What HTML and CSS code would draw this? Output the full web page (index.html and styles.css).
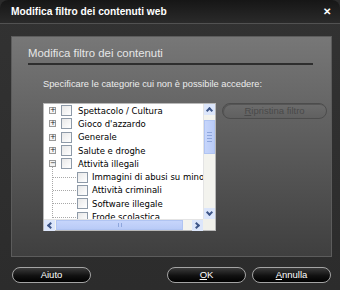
FILE: index.html
```html
<!DOCTYPE html>
<html>
<head>
	<title>Modifica filtro dei contenuti web</title>
	<link rel="stylesheet" href="styles.css">
</head>
<body>
	<div class="window">

		<div class="titlebar">
			<span class="title">Modifica filtro dei contenuti web</span>
			<span class="close">&#x2715;</span>
		</div>

		<div class="content">
			<div class="panel">
				<h2 class="heading">Modifica filtro dei contenuti</h2>
				<p class="hint">Specificare le categorie cui non è possibile accedere:</p>

				<div class="row">
					<div class="tree">
						<ul class="items">
							<li class="item"><span class="exp">+</span><span class="check"></span>Spettacolo / Cultura</li>
							<li class="item"><span class="exp">+</span><span class="check"></span>Gioco d'azzardo</li>
							<li class="item"><span class="exp">+</span><span class="check"></span>Generale</li>
							<li class="item"><span class="exp">+</span><span class="check"></span>Salute e droghe</li>
							<li class="item"><span class="exp">&minus;</span><span class="check"></span>Attività illegali</li>
							<li>
								<ul class="children">
									<li class="item"><span class="branch"></span><span class="check"></span>Immagini di abusi su minori</li>
									<li class="item"><span class="branch"></span><span class="check"></span>Attività criminali</li>
									<li class="item"><span class="branch"></span><span class="check"></span>Software illegale</li>
									<li class="item"><span class="branch"></span><span class="check"></span>Frode scolastica</li>
								</ul>
							</li>
						</ul>

						<div class="vscroll">
							<span class="arrow up"></span>
							<span class="thumb"><i></i><i></i><i></i><i></i></span>
							<span class="track"></span>
							<span class="arrow down"></span>
						</div>
						<div class="hscroll">
							<span class="arrow left"></span>
							<span class="thumb"><i></i><i></i></span>
							<span class="track"></span>
							<span class="arrow right"></span>
						</div>
						<div class="corner"></div>
					</div>

					<div class="btn disabled"><u>R</u>ipristina filtro</div>
				</div>
			</div>
		</div>

		<div class="footer">
			<div class="btn">Aiuto</div>
			<div class="spacer"></div>
			<div class="btn"><u>O</u>K</div>
			<div class="btn"><u>A</u>nnulla</div>
		</div>

	</div>
</body>
</html>
```

FILE: styles.css
```css
	html, body{
		margin: 0;
		padding: 0;
		background: #2b2b2b;
	}
	body{
		font-family: "Liberation Sans", Arial, sans-serif;
	}
	.window{
		width: 340px;
		height: 290px;
		display: flex;
		flex-direction: column;
		background: linear-gradient(#323232, #2c2c2c);
		border-radius: 8px 8px 0 0;
		overflow: hidden;
	}

	.titlebar{
		height: 23px;
		flex: none;
		display: flex;
		align-items: center;
		padding: 0 9px 0 11px;
		background: linear-gradient(#161616, #2a2a2a);
		border-bottom: 1px solid #525252;
	}
	.title{
		flex: 1;
		color: #fff;
		font-size: 10.2px;
		font-weight: bold;
	}
	.close{
		color: #fff;
		font-size: 10px;
		font-weight: bold;
	}

	.content{
		padding: 12px 8px 0 11px;
	}
	.panel{
		height: 219px;
		border: 1px solid #5c5c5c;
		background: linear-gradient(#777, #3f3f3f);
		padding: 0 4px 0 16px;
	}
	.heading{
		margin: 10px 14px 0 0;
		font-size: 11.4px;
		font-weight: normal;
		color: #e6e6e6;
		padding-bottom: 3px;
		border-bottom: 2px solid #2e2e2e;
		line-height: 13px;
	}
	.hint{
		margin: 14px 0 0 15px;
		font-size: 9.3px;
		color: #ececec;
		line-height: 11px;
	}

	.row{
		display: flex;
		align-items: flex-start;
		margin: 13px 0 0 15px;
		gap: 6px;
	}

	.tree{
		flex: none;
		width: 171px;
		height: 126px;
		border: 1px solid #b8b8b8;
		background: #fff;
		display: grid;
		grid-template-columns: 1fr 12px;
		grid-template-rows: 1fr 11px;
	}
	.items{
		list-style: none;
		margin: 0;
		padding: 0 0 0 5px;
		overflow: hidden;
		white-space: nowrap;
		font-family: "DejaVu Sans", sans-serif;
		font-size: 8.5px;
		color: #000;
	}
	.item{
		height: 13.3px;
		display: flex;
		align-items: center;
	}
	.exp, .check, .branch{
		flex: none;
	}
	.exp{
		width: 5px;
		height: 5px;
		border: 1px solid #9a9a9a;
		font-size: 7px;
		line-height: 5px;
		text-align: center;
		color: #222;
		margin-right: 5px;
		background: #f4f4f4;
	}
	.check{
		width: 9px;
		height: 9px;
		border: 1px solid #8e9aa8;
		background: linear-gradient(135deg, #e8e8e8, #fff);
		margin-right: 6px;
	}
	.children{
		list-style: none;
		margin: -3px 0 0 3px;
		padding: 3px 0 0;
		border-left: 1px dotted #a8a8a8;
	}
	.children .check{
		margin-right: 4px;
	}
	.branch{
		width: 23px;
		border-top: 1px dotted #a8a8a8;
		margin-right: 1px;
	}

	.vscroll, .hscroll{
		display: flex;
		background: #f3f3ee;
	}
	.vscroll{
		flex-direction: column;
		border-left: 1px solid #e4e4e4;
	}
	.track{
		flex: 1;
	}
	.arrow{
		flex: none;
		width: 11px;
		height: 11px;
		background: #dce6fb;
		display: flex;
		align-items: center;
		justify-content: center;
	}
	.arrow::after{
		content: "";
		width: 3px;
		height: 3px;
		border-top: 2px solid #3e5688;
		border-left: 2px solid #3e5688;
	}
	.arrow.up::after{
		transform: translateY(1px) rotate(45deg);
	}
	.arrow.down::after{
		transform: translateY(-1px) rotate(225deg);
	}
	.arrow.left::after{
		transform: translateX(1px) rotate(-45deg);
	}
	.arrow.right::after{
		transform: translateX(-1px) rotate(135deg);
	}
	.vscroll .thumb{
		height: 32px;
		margin-top: 5px;
		background: linear-gradient(90deg, #c6d5fb, #b9cbf7);
		border: 1px solid #b0c4f2;
		display: flex;
		flex-direction: column;
		align-items: center;
		justify-content: center;
		gap: 2px;
	}
	.vscroll .thumb i{
		width: 5px;
		height: 1px;
		background: #8ea6dc;
	}
	.hscroll{
		grid-column: 1;
		border-top: 1px solid #e4e4e4;
	}
	.hscroll .thumb{
		width: 125px;
		margin-left: 1px;
		background: linear-gradient(#c6d5fb, #b9cbf7);
		border: 1px solid #b0c4f2;
		display: flex;
		align-items: center;
		justify-content: center;
		gap: 2px;
	}
	.hscroll .thumb i{
		width: 1px;
		height: 4px;
		background: #8ea6dc;
	}
	.corner{
		background: #f0f0ea;
	}

	.btn{
		flex: none;
		width: 77px;
		height: 14px;
		border: 1px solid #a4a4a4;
		border-radius: 8px;
		background: linear-gradient(#3a3a3a, #111 55%, #000);
		color: #fff;
		font-size: 9.5px;
		line-height: 14px;
		text-align: center;
	}
	.btn.disabled{
		width: 103px;
		border-color: #4c4c4c;
		background: linear-gradient(#6c6c6c, #606060);
		color: #4a4a4a;
		box-shadow: inset 1px 1px 0 #555;
	}

	.footer{
		display: flex;
		gap: 6px;
		padding: 10px 9px 0 12px;
	}
	.spacer{
		flex: 1;
	}
```
